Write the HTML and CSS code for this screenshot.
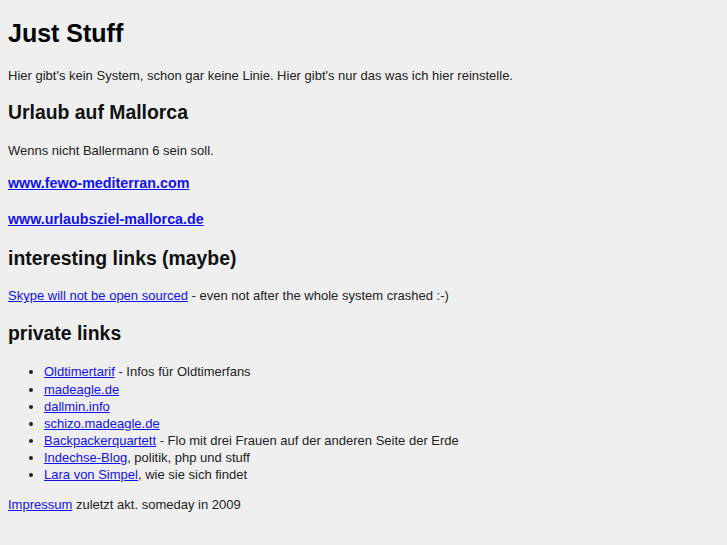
FILE: index.html
```html
<!DOCTYPE html>
<html lang="de">
<head>
    <meta charset="UTF-8">
    <title>Just Stuff</title>
    <link rel="stylesheet" href="styles.css">
</head>
<body>
    <h1>Just Stuff</h1>
    <p>Hier gibt's kein System, schon gar keine Linie. Hier gibt's nur das was ich hier reinstelle.</p>

    <h2>Urlaub auf Mallorca</h2>
    <p>Wenns nicht Ballermann 6 sein soll.</p>
    <h3><a href="#">www.fewo-mediterran.com</a></h3>
    <h3><a href="#">www.urlaubsziel-mallorca.de</a></h3>

    <h2>interesting links (maybe)</h2>
    <p><a href="#">Skype will not be open sourced</a> - even not after the whole system crashed :-)</p>

    <h2>private links</h2>
    <ul class="links">
        <li><a href="#">Oldtimertarif</a> - Infos für Oldtimerfans</li>
        <li><a href="#">madeagle.de</a></li>
        <li><a href="#">dallmin.info</a></li>
        <li><a href="#">schizo.madeagle.de</a></li>
        <li><a href="#">Backpackerquartett</a> - Flo mit drei Frauen auf der anderen Seite der Erde</li>
        <li><a href="#">Indechse-Blog</a>, politik, php und stuff</li>
        <li><a href="#">Lara von Simpel</a>, wie sie sich findet</li>
    </ul>

    <p class="footer"><a href="#">Impressum</a> zuletzt akt. someday in 2009</p>
</body>
</html>
```

FILE: styles.css
```css
body {
    margin: 8px;
    background: #efefef;
    color: #222;
    font-family: "Liberation Sans", Arial, sans-serif;
    font-size: 13px;
    line-height: 1.3;
}

a {
    color: #1111ee;
}

h1 {
    font-size: 25px;
    margin: 9px 0 18px;
    color: #000;
}

h2 {
    font-size: 19.4px;
    margin: 15.5px 0 17.5px;
    color: #111;
}

h3 {
    font-size: 14.3px;
    margin: 14px 0 17.5px;
}

p {
    margin: 13px 0;
}

.links {
    padding-left: 36px;
    margin: 11px 0 13px;
    line-height: 1.32;
}
```
